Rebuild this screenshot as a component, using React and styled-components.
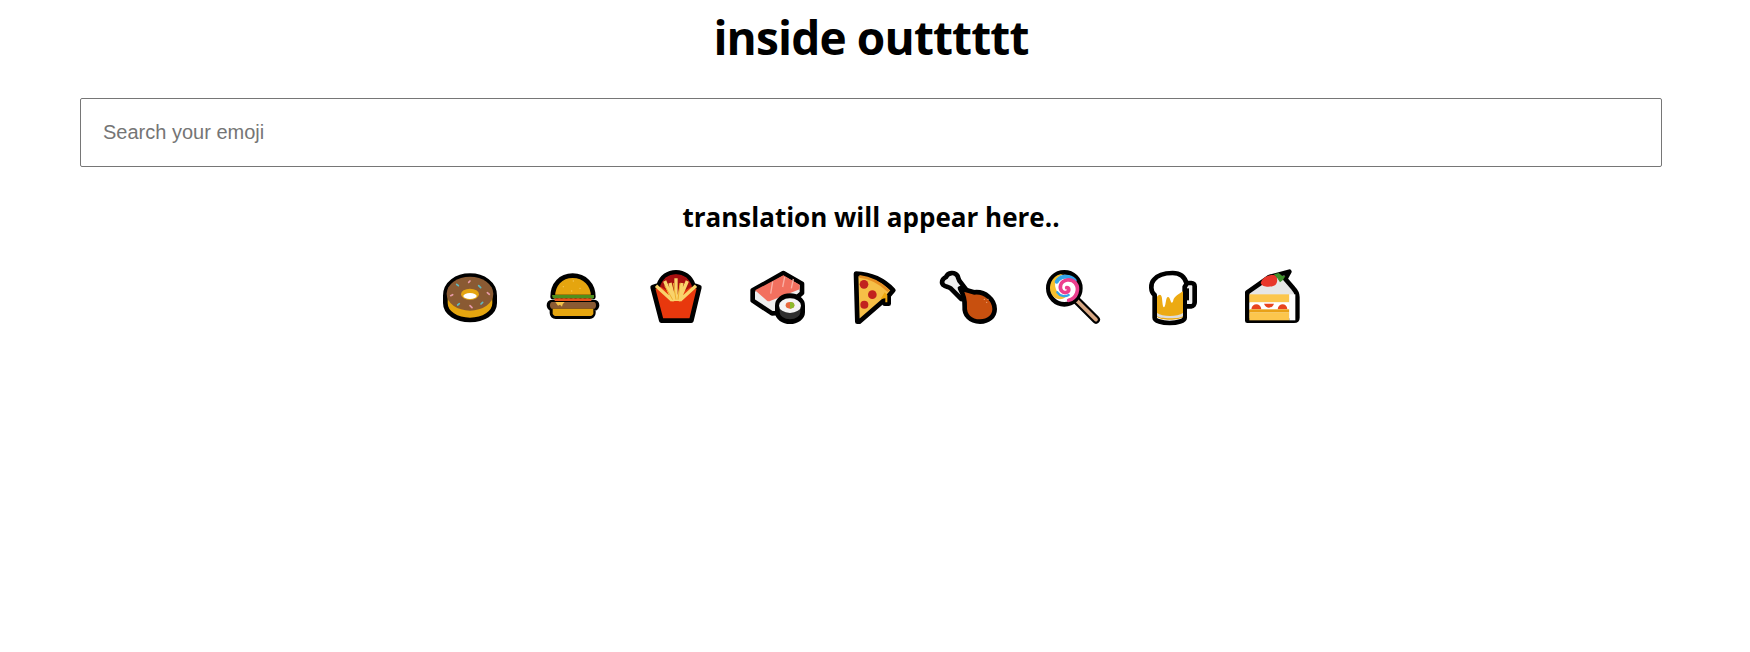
import React from "react";
import styled, { createGlobalStyle } from "styled-components";

const Global = createGlobalStyle`
  html, body { margin: 0; padding: 0; background: #fff; }
  body { font-family: "Open Sans", "Noto Sans", sans-serif; color: #000; }
`;

const Page = styled.main`
  width: 1742px;
  height: 652px;
  overflow: hidden;
  display: flex;
  flex-direction: column;
  align-items: center;
`;

const Title = styled.h1`
  margin: 8px 0 0;
  font-size: 46px;
  line-height: 58px;
  font-weight: 700;
  letter-spacing: -0.85px;
`;

const Search = styled.input`
  box-sizing: border-box;
  width: 1582px;
  height: 69px;
  margin-top: 32px;
  padding: 0 22px;
  border: 1px solid #767676;
  border-radius: 2px;
  font: 20px "Liberation Sans", Arial, sans-serif;
  &::placeholder { color: #757575; opacity: 1; }
`;

const Output = styled.h2`
  margin: 32px 0 0;
  font-size: 26px;
  line-height: 36px;
  font-weight: 700;
`;

const EmojiRow = styled.div`
  display: flex;
  margin-top: 20px;
`;

const EmojiCell = styled.svg`
  display: block;
  width: 100px;
  height: 80px;
  overflow: visible;
  cursor: pointer;
`;

const K = { stroke: "#000", strokeWidth: 14, strokeLinejoin: "round", strokeLinecap: "round" };

const Donut = () => (
  <EmojiCell viewBox="-27 0 300 240">
    <path {...K} fill="#e5a50f" d="M46 122C46 86 80 62 120 62s74 24 74 60v22c0 30-34 51-74 51s-74-21-74-51z" />
    <ellipse cx="120" cy="116" rx="70" ry="51" fill="#8a5a33" />
    <ellipse cx="120" cy="118" rx="27" ry="17" fill="#e5a50f" />
    <ellipse cx="120" cy="123" rx="20" ry="9" fill="#fff" />
    <g strokeWidth="5" strokeLinecap="round" fill="none">
      <path stroke="#5fb9c0" d="M80 88l5 4M146 92l6 6M88 146l-5 4M158 142l-5 5" />
      <path stroke="#e79aa8" d="M116 82l4-4M62 122l6-3M172 113l6 5M120 152l6 6" />
    </g>
  </EmojiCell>
);

const Burger = () => (
  <EmojiCell viewBox="273 0 300 240">
    <path {...K} fill="#e5a50f" d="M368 126C368 88 392 62 428 62s62 26 62 64z" />
    <path {...K} fill="#000" d="M366 141h126c12 0 12 20 0 20h-2v13c0 6-5 11-11 11H377c-6 0-11-5-11-11v-13c-12 0-12-20 0-20z" />
    <path fill="#8a5a33" d="M366 141h126c8 0 8 20 0 20H366c-8 0-8-20 0-20z" />
    <path fill="#e5a50f" d="M368 161h122v14c0 4-4 8-8 8H376c-4 0-8-4-8-8z" />
    <path fill="#4f8f1d" d="M366 120h126v8l-6 4-7-3-7 3-7-3-7 3-7-3-7 3-7-3-7 3-7-3-7 3-7-3-7 3-7-3-7 3-7-3-7 3-6-4z" />
    <rect x="374" y="130" width="110" height="8" fill="#e8551c" />
    <path fill="#f4c24b" d="M376 141h28l-6 7-2 7-6-6-6 3z" />
    <g fill="#f6c95c">
      <circle cx="400" cy="95" r="2" /><circle cx="430" cy="78" r="2" /><circle cx="450" cy="100" r="2" /><circle cx="425" cy="108" r="2" />
    </g>
  </EmojiCell>
);

const Fries = () => (
  <EmojiCell viewBox="-87 0 300 240">
    <path {...K} fill="#e8380d" d="M8 97l18-6C34 66 54 52 78 52s44 14 52 39l18 6-24 100H34z" />
    <path fill="#a80f0f" d="M30 94C38 70 56 58 78 58s40 12 48 36l-48 30z" />
    <g stroke="#f9d36b" strokeWidth="10" strokeLinecap="butt" fill="none">
      <path d="M18 92l48 44M44 78l26 60M60 84l14 54M78 70v68M96 84l-12 54M112 78l-26 60M138 92l-48 44" />
    </g>
    <path stroke="#eeae2e" strokeWidth="3" fill="none" d="M44 92l24 42M70 84l8 50M90 84l-6 50" />
  </EmojiCell>
);

const Sushi = () => (
  <EmojiCell viewBox="213 0 300 240">
    <path {...K} fill="#eeeeee" d="M308 106l92-52 56 32v28l-70 60-20 1-58-38z" />
    <path fill="#f2705f" d="M315 106l85-45 49 28v14l-87 34c-4 2-8 2-11 0z" />
    <path stroke="#f9b0a5" strokeWidth="4" fill="none" d="M368 80l-6 36M404 66l-6 30M430 72l-6 28" />
    <path {...K} fill="#2f2f2f" d="M382 152c0-18 18-30 38-30s38 12 38 30v20c0 16-18 28-38 28s-38-12-38-28z" />
    <ellipse cx="420" cy="152" rx="33" ry="22" fill="#f4f4f4" />
    <ellipse cx="420" cy="151" rx="13" ry="10" fill="#e8693e" />
    <path fill="#8bbb2c" d="M420 141a13 10 0 0 1 0 20z" />
  </EmojiCell>
);

const Pizza = () => (
  <EmojiCell viewBox="513 0 300 240">
    <path {...K} fill="#f6bf47" d="M618 56C664 58 704 78 730 106l-14 16v24h-12v-12L628 200h-6z" />
    <path fill="none" stroke="#e88f22" strokeWidth="8" d="M628 64c34 4 64 20 88 44" />
    <path fill="#f0a80f" d="M704 112l8 8v22h-6v-12l-14 2z" />
    <circle cx="642" cy="88" r="13" fill="#c1231e" />
    <circle cx="667" cy="119" r="13" fill="#c1231e" />
    <circle cx="643" cy="149" r="12" fill="#c1231e" />
  </EmojiCell>
);

const Chicken = () => (
  <EmojiCell viewBox="123 0 300 240">
    <path {...K} fill="#eee" d="M198 66c6-14 26-16 34-4 4 6 2 12 10 20l24 32-22 18-32-32c-8-6-14-4-22-10-6-6-6-16 8-24z" />
    <path {...K} fill="#c8500f" d="M240 100l42 12c34-4 62 22 62 50 0 22-18 38-44 38-30 0-48-20-46-46 1-20-4-36-14-54z" />
    <g fill="#f0a678"><circle cx="313" cy="133" r="2" /><circle cx="324" cy="133" r="2" /><circle cx="320" cy="142" r="2" /></g>
  </EmojiCell>
);

const Lollipop = () => (
  <EmojiCell viewBox="423 0 300 240">
    <path stroke="#000" strokeWidth="24" strokeLinecap="round" d="M590 136l58 58" />
    <path stroke="#d8a884" strokeWidth="11" strokeLinecap="round" d="M590 136l58 58" />
    <circle {...K} cx="553" cy="100" r="48" fill="#fff" />
    <path fill="#f8c12d" d="M511 108c-5-26 12-52 40-52-20 8-30 24-24 44 5 16 20 26 30 26-18 14-40 4-46-18z" />
    <path fill="none" stroke="#35a6e8" strokeWidth="12" strokeLinecap="round" d="M530 80c10-18 38-20 54-4" />
    <path fill="none" stroke="#ec3f8e" strokeWidth="11" strokeLinecap="round" d="M566 136c24-6 34-34 20-52-12-14-38-12-44 6-4 14 6 26 18 22 9-3 8-14 0-14" />
    <path fill="none" stroke="#35a6e8" strokeWidth="7" strokeLinecap="round" d="M532 112c8 12 24 14 34 8" />
  </EmojiCell>
);

const Beer = () => (
  <EmojiCell viewBox="33 0 300 240">
    <path {...K} fill="#efefef" d="M222 84h22c6 0 10 4 10 10v48c0 6-4 12-10 12h-22z" />
    <path stroke="#000" strokeWidth="12" d="M231 100v36" />
    <path {...K} fill="#fff" d="M134 120c-12-8-14-34-2-46 12-16 38-20 56-20 20 0 36 10 42 32l-6 10v92c0 10-22 16-45 16s-45-6-45-16z" />
    <path fill="#ecaa12" d="M141 125c6-8 12-8 14 0 2 6 2 32 7 32s5-26 10-30c6-4 8 6 11 14 2 4 6 2 7-6 2-10 20-20 29-26v76c-8 12-70 12-78 0z" />
    <path fill="#dcdcdc" d="M141 174c16 12 62 12 78 0v8c0 10-78 10-78 0z" />
  </EmojiCell>
);

const Cake = () => (
  <EmojiCell viewBox="333 0 300 240">
    <path {...K} fill="#e6e6e6" d="M412 112l66-46 60-16-12 22 24 28c8 8 12 14 12 26v62c0 6-4 9-10 9H412z" />
    <rect x="418" y="118" width="120" height="24" fill="#fcc64d" />
    <rect x="418" y="142" width="120" height="23" fill="#fff" />
    <path fill="#e8441f" d="M424 163c2-20 28-20 30 0zM462 146c6 16 24 16 30 0zM503 163c2-20 28-20 29 0z" />
    <rect x="418" y="163" width="120" height="9" fill="#e9a117" />
    <rect x="418" y="172" width="120" height="24" fill="#fcc64d" />
    <rect x="538" y="118" width="18" height="78" fill="#fff" />
    <path fill="#e8362a" d="M452 84c4-16 22-26 40-24 12 2 12 22 4 30-8 6-38 10-44-6z" />
    <path fill="#3f8f2c" d="M492 58l14-4 10 8 10 2-8 12-8 6-8-12z" />
  </EmojiCell>
);

const emojis = [Donut, Burger, Fries, Sushi, Pizza, Chicken, Lollipop, Beer, Cake];

export default function App() {
  return (
    <Page>
      <Global />
      <Title>inside outttttt</Title>
      <Search placeholder="Search your emoji" />
      <Output>translation will appear here..</Output>
      <EmojiRow>
        {emojis.map((E, i) => (
          <E key={i} />
        ))}
      </EmojiRow>
    </Page>
  );
}
